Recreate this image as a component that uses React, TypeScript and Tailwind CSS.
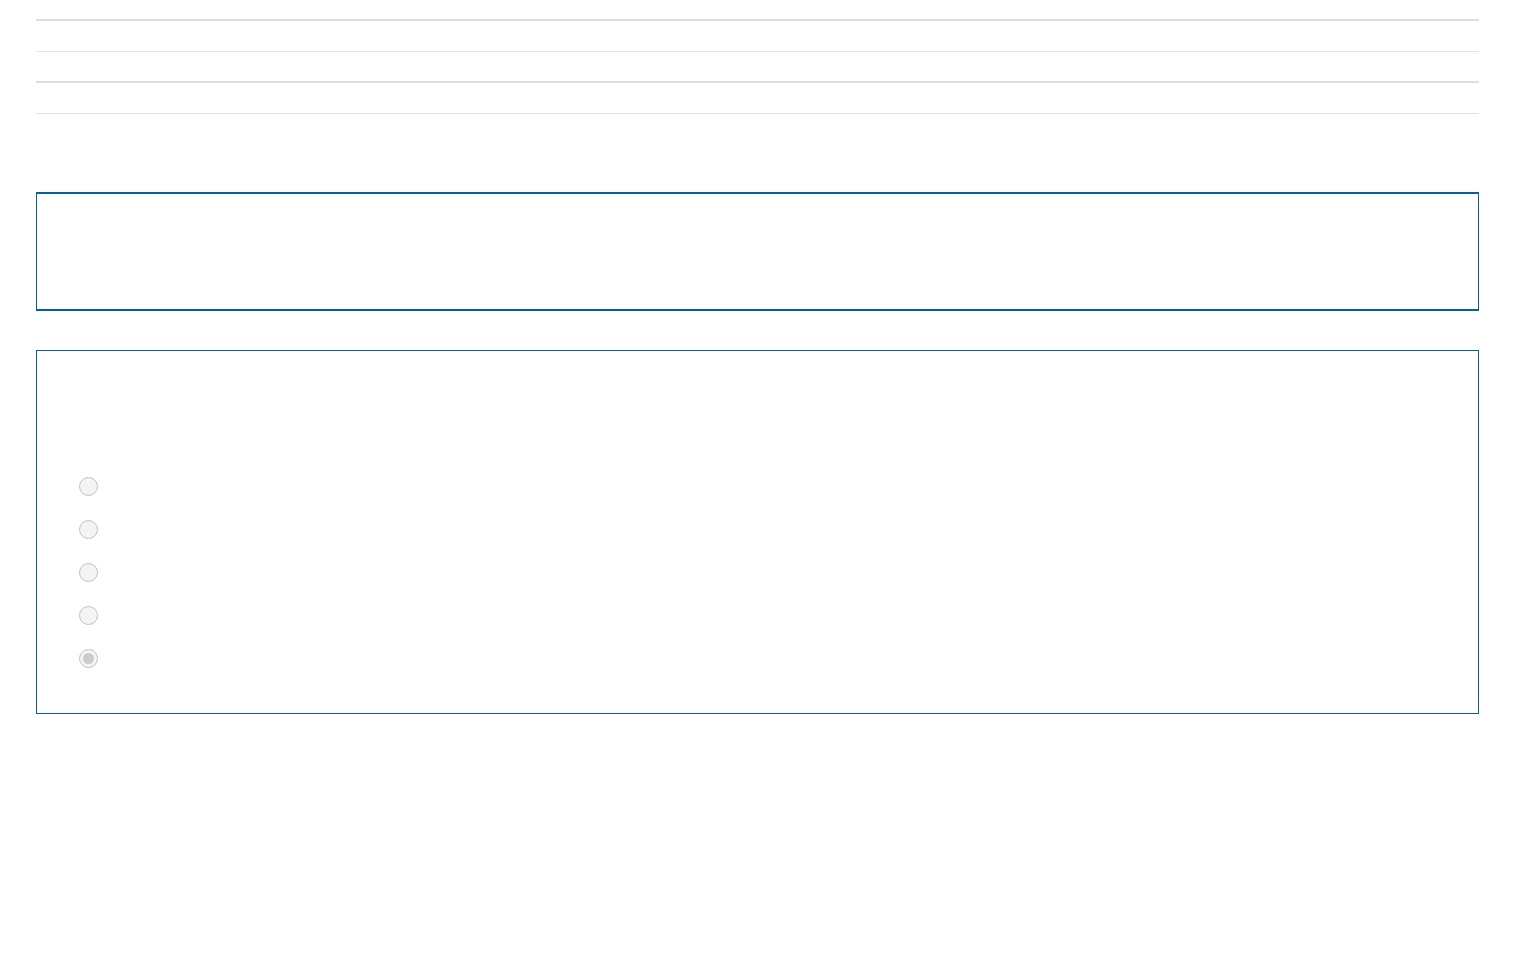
const options = [false, false, false, false, true];

function Radio({ checked }: { checked: boolean }) {
  return (
    <span className="flex h-[19px] w-[19px] items-center justify-center rounded-full border-[1.5px] border-[#c2c2c2] bg-[#f4f4f4]">
      {checked && <span className="h-[11px] w-[11px] rounded-full bg-[#cbcbcb]" />}
    </span>
  );
}

export default function App() {
  return (
    <div className="min-h-[965px] bg-white px-[36px] pt-[19px] font-['Liberation_Sans',sans-serif]">
      {/* table-ish header rows */}
      <div className="h-[33px] border-t-2 border-b border-t-[#dcdfe2] border-b-[#e3e3e3]" />
      <div className="mt-[29px] h-[33px] border-t-2 border-b border-t-[#dcdfe2] border-b-[#e3e3e3]" />

      {/* first panel */}
      <div className="mt-[78px] h-[119px] border border-y-2 border-[#00619e]" />

      {/* second panel with radios */}
      <div className="mt-[39px] h-[364px] border border-[#00619e] pl-[42px] pt-[126px]">
        <div className="flex flex-col gap-[24px]">
          {options.map((c, i) => (
            <Radio key={i} checked={c} />
          ))}
        </div>
      </div>
    </div>
  );
}
